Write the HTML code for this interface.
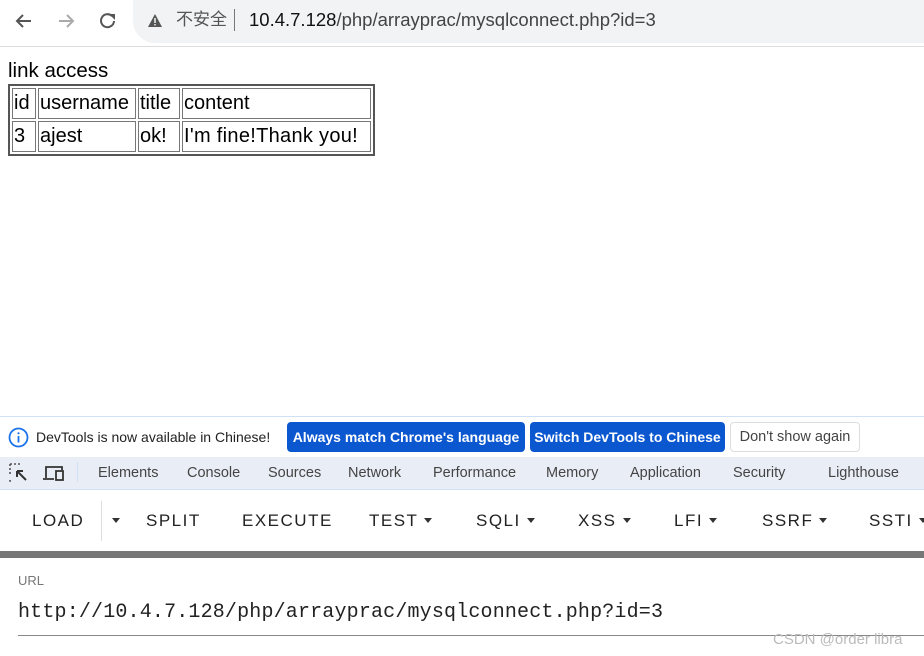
<!DOCTYPE html>
<html><head><meta charset="utf-8"><style>
*{margin:0;padding:0;box-sizing:border-box}
body{width:924px;height:656px;position:relative;overflow:hidden;background:#fff;font-family:"Liberation Sans","Noto Sans CJK SC",sans-serif}
.a{position:absolute;white-space:nowrap}
table{border:2px solid #555;border-spacing:2px;position:absolute;left:8px;top:84px;font-size:20px;border-collapse:separate;table-layout:fixed;width:365px}
td{border:1px solid #777;padding:0 1px;height:31px;line-height:29px;white-space:nowrap;overflow:hidden}
.btn{position:absolute;top:422px;height:30px;border-radius:4px;background:#0b57d0;color:#fff;font-weight:bold;font-size:14px;line-height:30px;padding:0 4px;white-space:nowrap;overflow:hidden;text-align:center}
.tab{position:absolute;top:465px;font-size:14.5px;color:#444;white-space:nowrap}
.tb{position:absolute;top:511px;font-size:17px;letter-spacing:1.5px;color:#222;font-weight:500;white-space:nowrap}
.car{display:inline-block;width:0;height:0;border-left:4px solid transparent;border-right:4px solid transparent;border-top:5px solid #333;vertical-align:middle;margin-left:6px;margin-bottom:3px}
</style></head><body>
<div class="a" style="left:133px;top:0;width:800px;height:43px;background:#f1f3f4;border-radius:0 0 0 22px"></div>
<svg class="a" style="left:14px;top:11px" width="110" height="20" viewBox="0 0 110 20"><path d="M17 10H3M9 4L3 10l6 6" stroke="#555" stroke-width="2" fill="none"/><path d="M45 10h14M53 4l6 6-6 6" stroke="#aaa" stroke-width="2" fill="none"/><path d="M98 5a6.5 6.5 0 1 0 2 5" stroke="#555" stroke-width="2" fill="none"/><path d="M95 3h6v6z" fill="#555"/></svg>
<svg class="a" style="left:148px;top:14px" width="14" height="13"><path d="M7 0L14 13H0z" fill="#555"/><rect x="6.3" y="4" width="1.4" height="5" fill="#fff"/><rect x="6.3" y="10" width="1.4" height="1.4" fill="#fff"/></svg>
<div class="a" style="left:176px;top:9px;font-size:17px;line-height:22px;color:#555">不安全</div>
<div class="a" style="left:234px;top:9px;width:1px;height:22px;background:#777"></div>
<div class="a" style="left:249px;top:9px;font-size:18.5px;line-height:22px;color:#444"><span style="color:#111">10.4.7.128</span>/php/arrayprac/mysqlconnect.php?id=3</div>
<div class="a" style="left:0;top:46px;width:924px;height:1px;background:#ddd"></div>
<div class="a" style="left:8px;top:59px;font-size:20.5px;color:#000">link access</div>
<table><colgroup><col style="width:24px"><col style="width:98px"><col style="width:42px"><col style="width:189px"></colgroup><tr><td>id</td><td>username</td><td>title</td><td>content</td></tr><tr><td>3</td><td>ajest</td><td>ok!</td><td style="letter-spacing:0.3px">I'm fine!Thank you!</td></tr></table>
<div class="a" style="left:0;top:416px;width:924px;height:1px;background:#cfe0f7"></div>
<svg class="a" style="left:8px;top:427px" width="21" height="21"><circle cx="10.5" cy="10.5" r="9" stroke="#1a73e8" stroke-width="1.8" fill="none"/><rect x="9.6" y="9" width="1.8" height="6.5" fill="#1a73e8"/><circle cx="10.5" cy="6.3" r="1.1" fill="#1a73e8"/></svg>
<div class="a" style="left:36px;top:429px;font-size:14px;color:#222">DevTools is now available in Chinese!</div>
<div class="btn" style="left:287px;width:238px">Always match Chrome's language</div>
<div class="btn" style="left:530px;width:195px">Switch DevTools to Chinese</div>
<div class="btn" style="left:730px;width:130px;background:#fff;color:#444;font-weight:normal;border:1px solid #ddd;line-height:28px;font-size:14.5px">Don't show again</div>
<div class="a" style="left:0;top:457px;width:924px;height:33px;background:#e9eef6;border-bottom:1px solid #cfe0f7"></div>
<svg class="a" style="left:9px;top:463px" width="60" height="20"><path d="M1 1h12M1 1v12M1 17v1h2" stroke="#555" stroke-width="1.6" stroke-dasharray="2 2" fill="none"/><path d="M8 8l9 9M8 8h6M8 8v6" stroke="#333" stroke-width="2" fill="none"/><path d="M37 15V4h16v3M34 16h11" stroke="#333" stroke-width="1.8" fill="none"/><rect x="47" y="8" width="7" height="9" stroke="#333" stroke-width="1.8" fill="none"/></svg>
<div class="a" style="left:77px;top:462px;width:1px;height:20px;background:#cfe0f7"></div>
<div class="tab" style="left:98px">Elements</div><div class="tab" style="left:187px">Console</div><div class="tab" style="left:268px">Sources</div><div class="tab" style="left:348px">Network</div><div class="tab" style="left:433px">Performance</div><div class="tab" style="left:546px">Memory</div><div class="tab" style="left:630px">Application</div><div class="tab" style="left:733px">Security</div><div class="tab" style="left:828px">Lighthouse</div>
<div class="a" style="left:101px;top:501px;width:1px;height:40px;background:#ddd"></div>
<div class="tb" style="left:32px">LOAD</div><div class="tb" style="left:106px"><span class="car"></span></div>
<div class="tb" style="left:146px">SPLIT</div><div class="tb" style="left:242px">EXECUTE</div>
<div class="tb" style="left:369px">TEST<span class="car"></span></div><div class="tb" style="left:476px">SQLI<span class="car"></span></div>
<div class="tb" style="left:578px">XSS<span class="car"></span></div><div class="tb" style="left:674px">LFI<span class="car"></span></div>
<div class="tb" style="left:762px">SSRF<span class="car"></span></div><div class="tb" style="left:869px">SSTI<span class="car"></span></div>
<div class="a" style="left:0;top:551px;width:924px;height:7px;background:#777"></div>
<div class="a" style="left:18px;top:573px;font-size:13px;color:#777">URL</div>
<div class="a" style="left:18px;top:601px;font-size:20px;color:#222;font-family:'Liberation Mono',monospace;letter-spacing:0.17px">http://10.4.7.128/php/arrayprac/mysqlconnect.php?id=3</div>
<div class="a" style="left:18px;top:635px;width:906px;height:1px;background:#888"></div>
<div class="a" style="left:773px;top:631px;font-size:15px;color:#bbb">CSDN @order libra</div>
</body></html>
